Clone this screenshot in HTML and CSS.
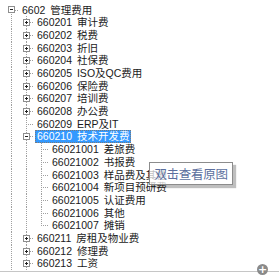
FILE: index.html
```html
<!DOCTYPE html>
<html lang="zh-CN">
<head>
    <meta charset="UTF-8">
    <title>科目树</title>
    <link rel="stylesheet" href="styles.css">
</head>
<body>
    <div class="view">
        <div class="tree">
            <div class="row">
                <span class="cell root"><svg class="box" width="7" height="7"><rect x=".5" y=".5" width="6" height="6"/><path d="M2 3.5h3"/></svg></span>
                <span class="label">6602 管理费用</span>
            </div>
            <div class="row">
                <span class="cell v"></span>
                <span class="cell t"><svg class="box" width="7" height="7"><rect x=".5" y=".5" width="6" height="6"/><path d="M2 3.5h3M3.5 2v3"/></svg></span>
                <span class="label">660201 审计费</span>
            </div>
            <div class="row">
                <span class="cell v"></span>
                <span class="cell t"><svg class="box" width="7" height="7"><rect x=".5" y=".5" width="6" height="6"/><path d="M2 3.5h3M3.5 2v3"/></svg></span>
                <span class="label">660202 税费</span>
            </div>
            <div class="row">
                <span class="cell v"></span>
                <span class="cell t"><svg class="box" width="7" height="7"><rect x=".5" y=".5" width="6" height="6"/><path d="M2 3.5h3M3.5 2v3"/></svg></span>
                <span class="label">660203 折旧</span>
            </div>
            <div class="row">
                <span class="cell v"></span>
                <span class="cell t"><svg class="box" width="7" height="7"><rect x=".5" y=".5" width="6" height="6"/><path d="M2 3.5h3M3.5 2v3"/></svg></span>
                <span class="label">660204 社保费</span>
            </div>
            <div class="row">
                <span class="cell v"></span>
                <span class="cell t"><svg class="box" width="7" height="7"><rect x=".5" y=".5" width="6" height="6"/><path d="M2 3.5h3M3.5 2v3"/></svg></span>
                <span class="label">660205 ISO及QC费用</span>
            </div>
            <div class="row">
                <span class="cell v"></span>
                <span class="cell t"><svg class="box" width="7" height="7"><rect x=".5" y=".5" width="6" height="6"/><path d="M2 3.5h3M3.5 2v3"/></svg></span>
                <span class="label">660206 保险费</span>
            </div>
            <div class="row">
                <span class="cell v"></span>
                <span class="cell t"><svg class="box" width="7" height="7"><rect x=".5" y=".5" width="6" height="6"/><path d="M2 3.5h3M3.5 2v3"/></svg></span>
                <span class="label">660207 培训费</span>
            </div>
            <div class="row">
                <span class="cell v"></span>
                <span class="cell t"><svg class="box" width="7" height="7"><rect x=".5" y=".5" width="6" height="6"/><path d="M2 3.5h3M3.5 2v3"/></svg></span>
                <span class="label">660208 办公费</span>
            </div>
            <div class="row">
                <span class="cell v"></span>
                <span class="cell t"></span>
                <span class="label">660209 ERP及IT</span>
            </div>
            <div class="row">
                <span class="cell v"></span>
                <span class="cell t"><svg class="box" width="7" height="7"><rect x=".5" y=".5" width="6" height="6"/><path d="M2 3.5h3"/></svg></span>
                <span class="label selected">660210 技术开发费</span>
            </div>
            <div class="row">
                <span class="cell v"></span>
                <span class="cell v"></span>
                <span class="cell t"></span>
                <span class="label">66021001 差旅费</span>
            </div>
            <div class="row">
                <span class="cell v"></span>
                <span class="cell v"></span>
                <span class="cell t"></span>
                <span class="label">66021002 书报费</span>
            </div>
            <div class="row">
                <span class="cell v"></span>
                <span class="cell v"></span>
                <span class="cell t"></span>
                <span class="label">66021003 样品费及其他</span>
            </div>
            <div class="row">
                <span class="cell v"></span>
                <span class="cell v"></span>
                <span class="cell t"></span>
                <span class="label">66021004 新项目预研费</span>
            </div>
            <div class="row">
                <span class="cell v"></span>
                <span class="cell v"></span>
                <span class="cell t"></span>
                <span class="label">66021005 认证费用</span>
            </div>
            <div class="row">
                <span class="cell v"></span>
                <span class="cell v"></span>
                <span class="cell t"></span>
                <span class="label">66021006 其他</span>
            </div>
            <div class="row">
                <span class="cell v"></span>
                <span class="cell v"></span>
                <span class="cell l"></span>
                <span class="label">66021007 摊销</span>
            </div>
            <div class="row">
                <span class="cell v"></span>
                <span class="cell t"><svg class="box" width="7" height="7"><rect x=".5" y=".5" width="6" height="6"/><path d="M2 3.5h3M3.5 2v3"/></svg></span>
                <span class="label">660211 房租及物业费</span>
            </div>
            <div class="row">
                <span class="cell v"></span>
                <span class="cell t"><svg class="box" width="7" height="7"><rect x=".5" y=".5" width="6" height="6"/><path d="M2 3.5h3M3.5 2v3"/></svg></span>
                <span class="label">660212 修理费</span>
            </div>
            <div class="row">
                <span class="cell v"></span>
                <span class="cell t"><svg class="box" width="7" height="7"><rect x=".5" y=".5" width="6" height="6"/><path d="M2 3.5h3M3.5 2v3"/></svg></span>
                <span class="label">660213 工资</span>
            </div>
        </div>
        <div class="footer"></div>

        <div class="tooltip">双击查看原图</div>
        <span class="zoom-btn">+</span>
    </div>
</body>
</html>
```

FILE: styles.css
```css
* {
    box-sizing: border-box;
}
body {
    margin: 0;
    background-color: white;
    font-family: "Liberation Sans", "Noto Sans CJK SC", sans-serif;
    overflow: hidden;
}
.view {
    position: relative;
    width: 279px;
    height: 275px;
    overflow: hidden;
}
.tree {
    height: 271px;
    overflow: hidden;
    padding: 3.6px 0 0 4px;
}
.row {
    display: flex;
    align-items: center;
    height: 12.7px;
    font-size: 10.5px;
    line-height: 12.7px;
    color: #1a1a1a;
    white-space: nowrap;
}
.cell {
    display: flex;
    align-items: center;
    justify-content: center;
    flex: 0 0 15px;
    height: 100%;
}
/* tree guide lines, dotted */
.v {
    background: repeating-linear-gradient(#a0a0a0 0 1px, transparent 1px 2px) 7px 0 / 1px 100% no-repeat;
}
.t {
    background:
        repeating-linear-gradient(#a0a0a0 0 1px, transparent 1px 2px) 7px 0 / 1px 100% no-repeat,
        repeating-linear-gradient(90deg, #a0a0a0 0 1px, transparent 1px 2px) 7px 6px / 8px 1px no-repeat;
}
.l {
    background:
        repeating-linear-gradient(#a0a0a0 0 1px, transparent 1px 2px) 7px 0 / 1px 7px no-repeat,
        repeating-linear-gradient(90deg, #a0a0a0 0 1px, transparent 1px 2px) 7px 6px / 8px 1px no-repeat;
}
.root {
    background:
        repeating-linear-gradient(#a0a0a0 0 1px, transparent 1px 2px) 7px 6px / 1px 7px no-repeat,
        repeating-linear-gradient(90deg, #a0a0a0 0 1px, transparent 1px 2px) 7px 6px / 8px 1px no-repeat;
}
.box {
    display: block;
}
.box rect {
    fill: white;
    stroke: #8e8e8e;
}
.box path {
    stroke: #222;
    stroke-width: 1;
}
.label {
    padding: 0 2px;
    margin-left: 1px;
    word-spacing: 2px;
}
.label.selected {
    background-color: #3399ff;
    color: white;
    outline: 1px dotted #7a7a7a;
    outline-offset: -1px;
}
.footer {
    height: 4px;
    border-top: 1px solid #c6c6c6;
}
.tooltip {
    position: absolute;
    left: 149px;
    top: 162px;
    width: 84px;
    height: 23px;
    border: 1px solid #8c8c8c;
    background-color: rgba(255, 255, 255, 0.72);
    box-shadow: 3px 3px 1px rgba(0, 0, 0, 0.25);
    color: #5c6f9e;
    font-family: "Noto Sans CJK SC", sans-serif;
    font-size: 12.5px;
    line-height: 21px;
    text-align: center;
    letter-spacing: -0.3px;
}
.zoom-btn {
    position: absolute;
    left: 257px;
    top: 264px;
    width: 11px;
    height: 11px;
    border-radius: 50%;
    background-color: #8a8a8a;
    color: white;
    font: bold 11px/11px "DejaVu Sans", sans-serif;
    text-align: center;
}
```
